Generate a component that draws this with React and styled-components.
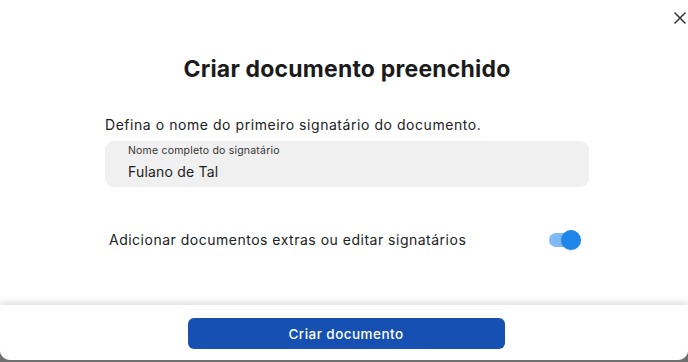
import styled, { createGlobalStyle } from "styled-components";

const GlobalStyle = createGlobalStyle`
    html, body {
        margin: 0;
        padding: 0;
        background: #6f6f6f;
    }
    * {
        box-sizing: border-box;
    }
`;

const StyledModal = styled.div`
    position: relative;
    width: 688px;
    height: 360px;
    background: #ffffff;
    border-radius: 0 0 10px 10px;
    display: flex;
    flex-direction: column;
    overflow: hidden;
    font-family: "Inter", "Noto Sans", sans-serif;
    color: #1e1e1e;
`;

const StyledCloseButton = styled.button`
    position: absolute;
    top: 10px;
    right: 0;
    width: 16px;
    height: 16px;
    padding: 0;
    border: none;
    background: transparent;
    cursor: pointer;
    display: flex;
    align-items: center;
    justify-content: center;
`;

const StyledBody = styled.div`
    flex: 1;
    padding: 54px 99px 0 105px;
    display: flex;
    flex-direction: column;
`;

const StyledTitle = styled.h1`
    margin: 0;
    text-align: center;
    font-size: 23px;
    font-weight: 700;
    letter-spacing: 0.2px;
    line-height: 30px;
    color: #1b1b1b;
`;

const StyledDescription = styled.p`
    margin: 31px 0 6px;
    font-size: 14px;
    line-height: 20px;
    letter-spacing: 0.55px;
    color: #222;
`;

const StyledField = styled.div`
    height: 46px;
    border-radius: 9px;
    background: #f0f0f0;
    padding: 2px 23px 0;
    display: flex;
    flex-direction: column;
`;

const StyledFieldLabel = styled.label`
    font-size: 10.5px;
    line-height: 15px;
    letter-spacing: 0.2px;
    color: #333;
`;

const StyledFieldValue = styled.span`
    font-size: 14px;
    line-height: 28px;
    letter-spacing: 0.2px;
    color: #1e1e1e;
`;

const StyledToggleRow = styled.div`
    margin-top: 42px;
    padding-left: 4px;
    padding-right: 8px;
    display: flex;
    align-items: center;
    justify-content: space-between;
`;

const StyledToggleLabel = styled.span`
    font-size: 14px;
    line-height: 20px;
    letter-spacing: 0.5px;
    color: #222;
`;

const StyledSwitch = styled.div`
    position: relative;
    width: 32px;
    height: 22px;
    display: flex;
    align-items: center;
`;

const StyledTrack = styled.div`
    width: 28px;
    height: 14px;
    border-radius: 7px;
    background: ${({ $on }) => ($on ? "#80bbf6" : "#c4c4c4")};
`;

const StyledThumb = styled.div`
    position: absolute;
    top: 1px;
    left: ${({ $on }) => ($on ? "12px" : "0")};
    width: 20px;
    height: 20px;
    border-radius: 50%;
    background: ${({ $on }) => ($on ? "#1f86e9" : "#fafafa")};
    box-shadow: 0 1px 2px rgba(0, 0, 0, 0.15);
`;

const StyledFooter = styled.div`
    height: 55px;
    background: #ffffff;
    box-shadow: 0 -3px 7px rgba(0, 0, 0, 0.13);
    display: flex;
    justify-content: center;
    padding-top: 13px;
    padding-left: 4px;
`;

const StyledPrimaryButton = styled.button`
    width: 317px;
    height: 31px;
    border: none;
    border-radius: 6px;
    background: #1650b2;
    color: #ffffff;
    font-family: inherit;
    font-size: 13.5px;
    font-weight: 500;
    letter-spacing: 0.45px;
    cursor: pointer;
`;

const CloseIcon = () => (
    <svg width="12" height="12" viewBox="0 0 12 12" fill="none">
        <path d="M1 1L11 11M11 1L1 11" stroke="#333" strokeWidth="1.5" strokeLinecap="round" />
    </svg>
);

export default function App() {
    const isExtraEnabled = true;

    return (
        <>
            <GlobalStyle />
            <StyledModal>
                <StyledCloseButton aria-label="Fechar">
                    <CloseIcon />
                </StyledCloseButton>
                <StyledBody>
                    <StyledTitle>Criar documento preenchido</StyledTitle>
                    <StyledDescription>Defina o nome do primeiro signatário do documento.</StyledDescription>
                    <StyledField>
                        <StyledFieldLabel>Nome completo do signatário</StyledFieldLabel>
                        <StyledFieldValue>Fulano de Tal</StyledFieldValue>
                    </StyledField>
                    <StyledToggleRow>
                        <StyledToggleLabel>Adicionar documentos extras ou editar signatários</StyledToggleLabel>
                        <StyledSwitch>
                            <StyledTrack $on={isExtraEnabled} />
                            <StyledThumb $on={isExtraEnabled} />
                        </StyledSwitch>
                    </StyledToggleRow>
                </StyledBody>
                <StyledFooter>
                    <StyledPrimaryButton>Criar documento</StyledPrimaryButton>
                </StyledFooter>
            </StyledModal>
        </>
    );
}
